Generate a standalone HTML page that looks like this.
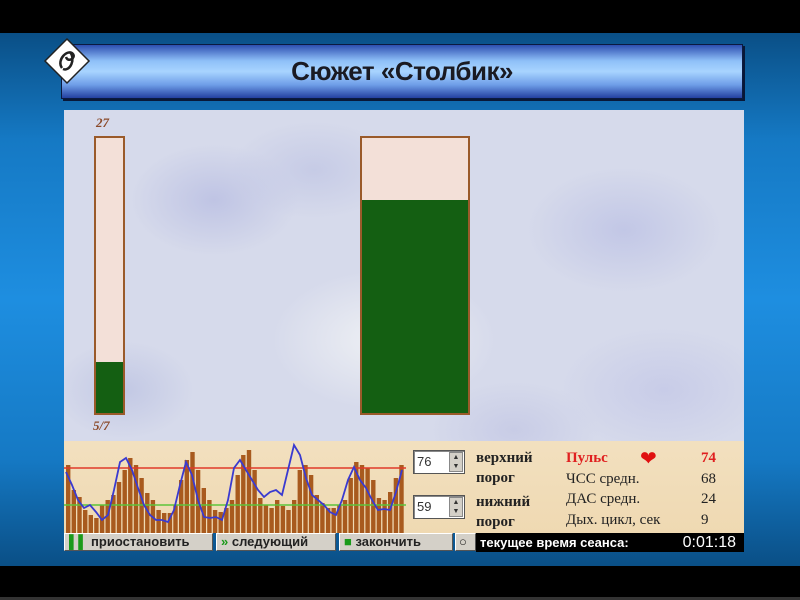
<!DOCTYPE html>
<html><head><meta charset="utf-8"><style>
*{margin:0;padding:0;box-sizing:border-box}
body{width:800px;height:600px;background:#000;position:relative;overflow:hidden;font-family:"Liberation Sans",sans-serif}
.abs{position:absolute}
#blue{left:0;top:33px;width:800px;height:533px;background:linear-gradient(180deg,#0a4f86 0%,#1579c4 20%,#1e8ee0 50%,#1579c4 80%,#0a4f86 100%)}
#title{left:61px;top:44px;width:682px;height:55px;border:1px solid #0b1a40;background:linear-gradient(180deg,#2d4fb0 0%,#8fc0f8 30%,#a8d4ff 50%,#6f9ee8 75%,#2340a0 100%);box-shadow:2px 2px 0 #081838;text-align:center;font-size:26px;font-weight:bold;color:#1a1a22;line-height:53px;letter-spacing:-0.5px}
#marble{left:64px;top:110px;width:680px;height:331px;background:
radial-gradient(ellipse 120px 80px at 150px 90px,#bfc4e4 0,transparent 70%),
radial-gradient(ellipse 160px 100px at 320px 230px,#eef0f4 0,transparent 70%),
radial-gradient(ellipse 140px 90px at 560px 120px,#c2c7e6 0,transparent 70%),
radial-gradient(ellipse 150px 90px at 600px 280px,#c8cce8 0,transparent 70%),
radial-gradient(ellipse 100px 70px at 60px 280px,#c2c8e4 0,transparent 70%),
radial-gradient(ellipse 120px 70px at 250px 60px,#c6cbe6 0,transparent 70%),
radial-gradient(ellipse 120px 70px at 450px 320px,#c8cce6 0,transparent 70%),
#d6daeb}
.lbl{font-family:"Liberation Serif",serif;font-style:italic;font-weight:bold;color:#8b4a2a;font-size:13px}
#tan{left:64px;top:441px;width:680px;height:92px;background:linear-gradient(180deg,#f2e0bf,#efd9b2)}
.inp{background:#fff;border:1px solid #555;box-shadow:inset 1px 1px 0 #888;width:52px;height:24px;font-size:13px;padding:3px 0 0 3px;color:#333}
.spin{position:absolute;right:1px;top:1px;width:14px;height:20px;background:#d4d0c8;border:1px solid #888;font-size:7px;line-height:9px;text-align:center}
.ser{font-family:"Liberation Serif",serif;font-size:15px;font-weight:bold;color:#222}
.btn{top:533px;height:18px;background:#d4d0c8;border:1px solid #fff;border-right-color:#555;border-bottom-color:#555;font-size:13px;font-weight:bold;color:#222;line-height:16px;padding-left:4px;white-space:nowrap}
</style></head><body>
<div id="blue" class="abs"></div>
<div id="title" class="abs">Сюжет «Столбик»</div>
<svg class="abs" style="left:40px;top:36px" width="54" height="54" viewBox="0 0 54 54">
<path d="M27 3 L49 25 L27 47 L5 25 Z" fill="#fff" stroke="#222" stroke-width="1.5"/>
<path d="M22 32 C16 24 28 12 33 18 C36 22 28 27 26 21 M30 16 C36 23 30 36 23 33" fill="none" stroke="#222" stroke-width="2.5"/>
</svg>
<div id="marble" class="abs"></div>
<div class="abs lbl" style="left:96px;top:115px">27</div>
<div class="abs lbl" style="left:93px;top:418px">5/7</div>
<div class="abs" style="left:94px;top:136px;width:31px;height:279px;border:2px solid #9a5a2a;background:#f3e0d8"></div>
<div class="abs" style="left:96px;top:362px;width:27px;height:51px;background:#145f12"></div>
<div class="abs" style="left:360px;top:136px;width:110px;height:279px;border:2px solid #9a5a2a;background:#f3e0d8"></div>
<div class="abs" style="left:362px;top:200px;width:106px;height:213px;background:#145f12"></div>
<div id="tan" class="abs"></div>
<svg class="abs" style="left:64px;top:441px" width="342" height="92" viewBox="64 441 342 92">
<g fill="#a85a1e">
<rect x="66" y="465" width="4.4" height="90"/><rect x="71.6" y="490" width="4.4" height="90"/><rect x="77.3" y="497" width="4.4" height="90"/><rect x="83" y="510" width="4.4" height="90"/><rect x="88.6" y="515" width="4.4" height="90"/><rect x="94.2" y="518" width="4.4" height="90"/><rect x="99.9" y="505" width="4.4" height="90"/><rect x="105.5" y="500" width="4.4" height="90"/><rect x="111.2" y="495" width="4.4" height="90"/><rect x="116.8" y="482" width="4.4" height="90"/>
<rect x="122.5" y="470" width="4.4" height="90"/><rect x="128.1" y="458" width="4.4" height="90"/><rect x="133.8" y="465" width="4.4" height="90"/><rect x="139.4" y="478" width="4.4" height="90"/><rect x="145.1" y="493" width="4.4" height="90"/><rect x="150.7" y="500" width="4.4" height="90"/><rect x="156.4" y="510" width="4.4" height="90"/><rect x="162" y="513" width="4.4" height="90"/><rect x="167.7" y="513" width="4.4" height="90"/><rect x="173.3" y="505" width="4.4" height="90"/>
<rect x="179" y="480" width="4.4" height="90"/><rect x="184.6" y="460" width="4.4" height="90"/><rect x="190.3" y="452" width="4.4" height="90"/><rect x="195.9" y="470" width="4.4" height="90"/><rect x="201.6" y="488" width="4.4" height="90"/><rect x="207.2" y="500" width="4.4" height="90"/><rect x="212.9" y="510" width="4.4" height="90"/><rect x="218.5" y="512" width="4.4" height="90"/><rect x="224.2" y="508" width="4.4" height="90"/><rect x="229.8" y="500" width="4.4" height="90"/>
<rect x="235.5" y="475" width="4.4" height="90"/><rect x="241.1" y="455" width="4.4" height="90"/><rect x="246.8" y="450" width="4.4" height="90"/><rect x="252.4" y="470" width="4.4" height="90"/><rect x="258.1" y="498" width="4.4" height="90"/><rect x="263.7" y="505" width="4.4" height="90"/><rect x="269.4" y="508" width="4.4" height="90"/><rect x="275" y="500" width="4.4" height="90"/><rect x="280.7" y="506" width="4.4" height="90"/><rect x="286.3" y="510" width="4.4" height="90"/>
<rect x="292" y="500" width="4.4" height="90"/><rect x="297.6" y="470" width="4.4" height="90"/><rect x="303.3" y="465" width="4.4" height="90"/><rect x="308.9" y="475" width="4.4" height="90"/><rect x="314.6" y="495" width="4.4" height="90"/><rect x="320.2" y="503" width="4.4" height="90"/><rect x="325.9" y="508" width="4.4" height="90"/><rect x="331.5" y="508" width="4.4" height="90"/><rect x="337.2" y="505" width="4.4" height="90"/><rect x="342.8" y="500" width="4.4" height="90"/>
<rect x="348.5" y="478" width="4.4" height="90"/><rect x="354.1" y="462" width="4.4" height="90"/><rect x="359.8" y="465" width="4.4" height="90"/><rect x="365.4" y="468" width="4.4" height="90"/><rect x="371.1" y="480" width="4.4" height="90"/><rect x="376.7" y="498" width="4.4" height="90"/><rect x="382.4" y="500" width="4.4" height="90"/><rect x="388" y="492" width="4.4" height="90"/><rect x="393.7" y="478" width="4.4" height="90"/><rect x="399.3" y="465" width="4.4" height="90"/>
</g>
<line x1="64" y1="468" x2="406" y2="468" stroke="#e03a2a" stroke-width="1.5"/>
<line x1="64" y1="505" x2="406" y2="505" stroke="#5cc43a" stroke-width="1.5"/>
<polyline fill="none" stroke="#3a3ad0" stroke-width="1.8" points="66,472 72,485 78,500 84,508 90,505 96,512 102,520 108,515 114,490 120,462 126,458 132,470 138,488 144,505 150,515 156,520 162,520 168,522 174,510 180,485 186,462 192,475 198,500 204,517 210,518 216,517 222,520 228,500 234,468 240,460 246,470 252,480 258,490 264,497 270,492 276,490 282,495 288,470 294,445 300,455 306,478 312,495 318,500 324,505 330,512 336,515 342,500 348,480 354,467 360,480 366,488 372,500 378,510 384,509 390,510 396,492 402,470"/>
</svg>
<div class="abs inp" style="left:413px;top:450px">76<div class="spin">▲<br>▼</div></div>
<div class="abs inp" style="left:413px;top:495px">59<div class="spin">▲<br>▼</div></div>
<div class="abs ser" style="left:476px;top:448px;line-height:20px">верхний<br>порог</div>
<div class="abs ser" style="left:476px;top:492px;line-height:20px">нижний<br>порог</div>
<div class="abs ser" style="left:566px;top:448px;line-height:20.5px;font-weight:normal;font-size:15px">
<span style="color:#e02020;font-weight:bold">Пульс</span><br>ЧСС средн.<br>ДАС средн.<br>Дых. цикл, сек</div>
<div class="abs" style="left:640px;top:446px;color:#e01010;font-size:20px">❤</div>
<div class="abs ser" style="left:701px;top:448px;line-height:20.5px;font-weight:normal"><span style="color:#e02020;font-weight:bold">74</span><br>68<br>24<br>9</div>
<div class="abs btn" style="left:64px;width:149px"><span style="color:#1a9a1a">▌▌</span> приостановить</div>
<div class="abs btn" style="left:216px;width:120px"><span style="color:#1a9a1a">»</span> следующий</div>
<div class="abs btn" style="left:339px;width:114px"><span style="color:#1a9a1a">■</span> закончить</div>
<div class="abs btn" style="left:455px;width:21px;padding-left:3px">○</div>
<div class="abs" style="left:476px;top:533px;width:268px;height:19px;background:#000;color:#fff;font-size:13px;font-weight:bold;line-height:19px;padding-left:4px">текущее время сеанса: <span style="position:absolute;right:8px;font-size:16px;font-weight:normal">0:01:18</span></div>
<div class="abs" style="left:0;top:597px;width:800px;height:3px;background:#333"></div>
</body></html>
